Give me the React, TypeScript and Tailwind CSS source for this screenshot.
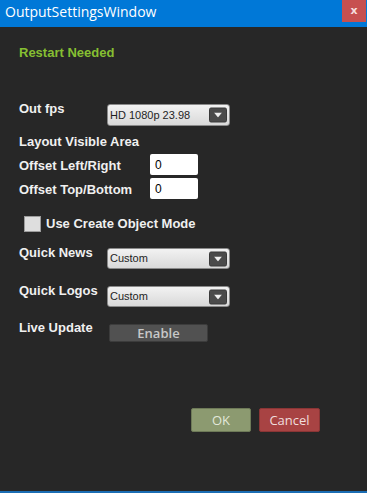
import React from "react";

function Select({ value, h = 21 }: { value: string; h?: number }) {
  return (
    <div
      className="relative flex items-center w-[123px] rounded-[3px] border border-[#8a8a8a] bg-gradient-to-b from-[#f2f2f2] to-[#d9d9d9] pl-[2px]"
      style={{ height: h }}
    >
      <span className="text-[11px] leading-none text-[#1e1e1e] font-['Liberation_Sans',Arial,sans-serif]">
        {value}
      </span>
      <div className="absolute right-[2px] top-1/2 -translate-y-1/2 w-[18px] h-[15px] rounded-[2px] bg-[#4b4b4b] border border-[#3a3a3a] flex items-center justify-center">
        <svg width="8" height="5" viewBox="0 0 8 5">
          <path d="M0 0 L8 0 L4 5 Z" fill="#f0f0f0" />
        </svg>
      </div>
    </div>
  );
}

export default function App() {
  const label =
    "text-[13px] leading-[14px] font-bold text-[#f0f0f0] font-['Liberation_Sans',Arial,sans-serif] whitespace-nowrap";
  return (
    <div className="w-[367px] h-[493px] bg-[#272727] flex flex-col border-b-[2px] border-b-[#1b6db3] overflow-hidden">
      <div className="h-[27px] bg-[#0078d7] flex items-start shrink-0">
        <div className="pl-[5px] pt-[2px] text-[14px] leading-[20px] text-white font-['Open_Sans',sans-serif]">
          OutputSettingsWindow
        </div>
        <div className="ml-auto mr-[1px] w-[24px] h-[22px] bg-[#c75050] flex items-center justify-center">
          <span className="text-[11px] leading-none font-bold text-[#f6dede] font-['DejaVu_Sans',sans-serif] -mt-[1px]">
            x
          </span>
        </div>
      </div>
      <div className="flex flex-col pl-[19px]">
        <div className="mt-[19px] text-[13px] leading-[14px] font-bold text-[#86bf32] font-['Liberation_Sans',Arial,sans-serif]">
          Restart Needed
        </div>

        <div className="mt-[42px] flex items-start">
          <div className={label + " w-[88px]"}>Out fps</div>
          <div className="mt-[2px]">
            <Select value="HD 1080p 23.98" h={22} />
          </div>
        </div>

        <div className={label + " mt-[9px]"}>Layout Visible Area</div>

        <div className="mt-[5px] flex items-center">
          <div className={label + " w-[131px] pt-[2px]"}>Offset Left/Right</div>
          <div className="w-[48px] h-[21px] bg-white rounded-[2px] flex items-center pl-[5px] text-[12px] text-black font-['Liberation_Sans',Arial,sans-serif]">
            0
          </div>
        </div>
        <div className="mt-[3px] flex items-center">
          <div className={label + " w-[131px] pt-[2px]"}>Offset Top/Bottom</div>
          <div className="w-[48px] h-[21px] bg-white rounded-[2px] flex items-center pl-[5px] text-[12px] text-black font-['Liberation_Sans',Arial,sans-serif]">
            0
          </div>
        </div>

        <div className="mt-[17px] flex items-center ml-[5px]">
          <div className="w-[17px] h-[16px] bg-[#dedede] border border-[#9c9c9c]" />
          <div className={label + " ml-[5px]"}>Use Create Object Mode</div>
        </div>

        <div className="mt-[14px] flex items-start">
          <div className={label + " w-[88px]"}>Quick News</div>
          <div className="mt-[2px]">
            <Select value="Custom" />
          </div>
        </div>
        <div className="mt-[15px] flex items-start">
          <div className={label + " w-[88px]"}>Quick Logos</div>
          <div className="mt-[2px]">
            <Select value="Custom" />
          </div>
        </div>

        <div className="mt-[14px] flex items-start">
          <div className={label + " w-[90px]"}>Live Update</div>
          <div className="mt-[3px] w-[99px] h-[18px] bg-[#515151] border border-[#3c3c3c] rounded-[2px] flex items-center justify-center text-[13px] leading-none font-semibold text-[#c8c8c8] font-['Open_Sans',sans-serif]">
            Enable
          </div>
        </div>

        <div className="mt-[66px] flex ml-[172px] gap-[8px]">
          <div className="w-[60px] h-[24px] bg-[#8c9a70] border border-[#6e7a58] rounded-[2px] flex items-center justify-center text-[13px] leading-none text-[#e2e8da] font-['Open_Sans',sans-serif]">
            OK
          </div>
          <div className="w-[61px] h-[24px] bg-[#a84343] border border-[#8a3535] rounded-[2px] flex items-center justify-center text-[13px] leading-none text-[#f0dede] font-['Open_Sans',sans-serif]">
            Cancel
          </div>
        </div>
      </div>
    </div>
  );
}
